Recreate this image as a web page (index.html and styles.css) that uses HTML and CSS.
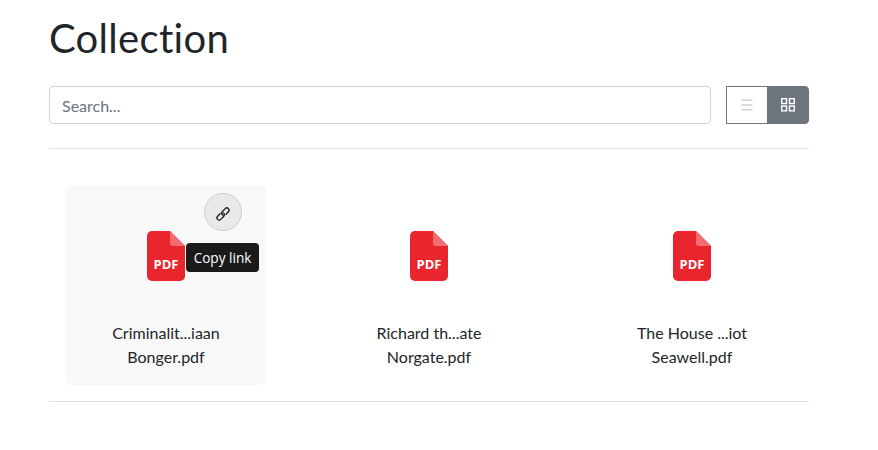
FILE: index.html
```html
<!DOCTYPE html>
<html lang="en">

<head>
    <meta charset="UTF-8">
    <meta name="viewport" content="width=device-width, initial-scale=1.0">
    <title>Collection</title>
    <link rel="stylesheet" href="styles.css">
</head>

<body>

    <div class="container">
        <h1 class="title">Collection</h1>

        <div class="toolbar">
            <input class="search" type="text" placeholder="Search...">
            <div class="view-toggle">
                <button class="view-btn" type="button" aria-label="List view">
                    <svg width="14" height="14" viewBox="0 0 14 14" fill="none" stroke="#ccd2d8" stroke-width="1.6">
                        <path d="M1.500 2.200h11M1.500 7h11M1.500 11.800h11" />
                    </svg>
                </button>
                <button class="view-btn active" type="button" aria-label="Grid view">
                    <svg width="16" height="16" viewBox="0 0 16 16" fill="none" stroke="#fff" stroke-width="1.4">
                        <rect x="1.700" y="1.700" width="4.800" height="4.800" />
                        <rect x="9.500" y="1.700" width="4.800" height="4.800" />
                        <rect x="1.700" y="9" width="4.800" height="4.800" />
                        <rect x="9.500" y="9" width="4.800" height="4.800" />
                    </svg>
                </button>
            </div>
        </div>

        <div class="files">
            <div class="file hovered">
                <button class="copy-btn" type="button" aria-label="Copy link">
                    <svg class="link-icon" width="16" height="16" viewBox="0 0 16 16" fill="none" stroke="#222" stroke-width="1.4" stroke-linecap="round">
                        <g transform="rotate(-45 8 8)">
                            <path d="M6 5.800H2.600a2.200 2.200 0 0 0 0 4.400H7a2.100 2.100 0 0 0 1.800-3.100" />
                            <path d="M10 10.200h3.400a2.200 2.200 0 0 0 0-4.400H9a2.100 2.100 0 0 0-1.800 3.100" />
                        </g>
                    </svg>
                </button>
                <span class="tooltip">Copy link</span>
                <svg class="pdf-icon" width="38" height="50" viewBox="0 0 38 50">
                    <path d="M5 0h18l15 15v30a5 5 0 0 1-5 5H5a5 5 0 0 1-5-5V5a5 5 0 0 1 5-5z" fill="#e9252d" />
                    <path d="M23 0l15 15H26a3 3 0 0 1-3-3z" fill="#f26d72" />
                    <text class="pdf-label" x="19" y="37.500" text-anchor="middle">PDF</text>
                </svg>
                <div class="file-name">Criminalit...iaan Bonger.pdf</div>
            </div>

            <div class="file">
                <svg class="pdf-icon" width="38" height="50" viewBox="0 0 38 50">
                    <path d="M5 0h18l15 15v30a5 5 0 0 1-5 5H5a5 5 0 0 1-5-5V5a5 5 0 0 1 5-5z" fill="#e9252d" />
                    <path d="M23 0l15 15H26a3 3 0 0 1-3-3z" fill="#f26d72" />
                    <text class="pdf-label" x="19" y="37.500" text-anchor="middle">PDF</text>
                </svg>
                <div class="file-name">Richard th...ate Norgate.pdf</div>
            </div>

            <div class="file">
                <svg class="pdf-icon" width="38" height="50" viewBox="0 0 38 50">
                    <path d="M5 0h18l15 15v30a5 5 0 0 1-5 5H5a5 5 0 0 1-5-5V5a5 5 0 0 1 5-5z" fill="#e9252d" />
                    <path d="M23 0l15 15H26a3 3 0 0 1-3-3z" fill="#f26d72" />
                    <text class="pdf-label" x="19" y="37.500" text-anchor="middle">PDF</text>
                </svg>
                <div class="file-name">The House ...iot Seawell.pdf</div>
            </div>
        </div>
    </div>

</body>

</html>
```

FILE: styles.css
```css
* {
    box-sizing: border-box;
}

body {
    font-family: 'Lato', sans-serif;
    font-variant-ligatures: none;
    color: #212529;
    background-color: #fff;
    margin: 0;
}

.container {
    width: 760px;
    margin-left: 49px;
    padding-top: 14px;
}

.title {
    font-size: 40px;
    font-weight: 400;
    line-height: 48px;
    letter-spacing: 0.3px;
    margin: 0 0 24px;
}

.toolbar {
    display: flex;
    justify-content: space-between;
    padding-bottom: 24px;
    border-bottom: 1px solid #dee2e6;
}

.search {
    width: 662px;
    height: 38px;
    padding: 6px 12px;
    font-family: 'Lato', sans-serif;
    font-size: 16px;
    color: #212529;
    border: 1px solid #ced4da;
    border-radius: 4px;
    outline: none;
}

.search::placeholder {
    color: #6c757d;
}

.view-toggle {
    display: flex;
    width: 83px;
    height: 38px;
}

.view-btn {
    flex: 1;
    display: flex;
    align-items: center;
    justify-content: center;
    padding: 0;
    background-color: #fff;
    border: 1px solid #6c757d;
}

.view-btn.active {
    background-color: #6c757d;
    border-radius: 0 4px 4px 0;
}

.files {
    display: grid;
    grid-template-columns: repeat(3, 200px);
    column-gap: 63px;
    padding: 36px 17px 16px;
    border-bottom: 1px solid #dee2e6;
}

.file {
    position: relative;
    height: 200px;
    padding-top: 46px;
    display: flex;
    flex-direction: column;
    align-items: center;
    border-radius: 6px;
}

.file.hovered {
    background-color: #f8f8f8;
}

.pdf-label {
    font-family: 'Open Sans', sans-serif;
    font-size: 13px;
    font-weight: 700;
    fill: #fff;
}

.file-name {
    width: 130px;
    margin-top: 40px;
    font-size: 16px;
    line-height: 24px;
    text-align: center;
}

.copy-btn {
    position: absolute;
    top: 8px;
    right: 24px;
    width: 38px;
    height: 38px;
    display: flex;
    align-items: center;
    justify-content: center;
    padding: 0;
    background-color: #e9e9e9;
    border: 1px solid #cfcfcf;
    border-radius: 50%;
}

.link-icon {
    margin: 3px 1px 0 0;
}

.tooltip {
    position: absolute;
    top: 58px;
    left: 120px;
    z-index: 1;
    height: 29px;
    width: 73px;
    font-family: 'Open Sans', sans-serif;
    font-size: 13.600px;
    line-height: 30px;
    text-align: center;
    color: #fff;
    background-color: #1a1a1a;
    border-radius: 4px;
}
```
